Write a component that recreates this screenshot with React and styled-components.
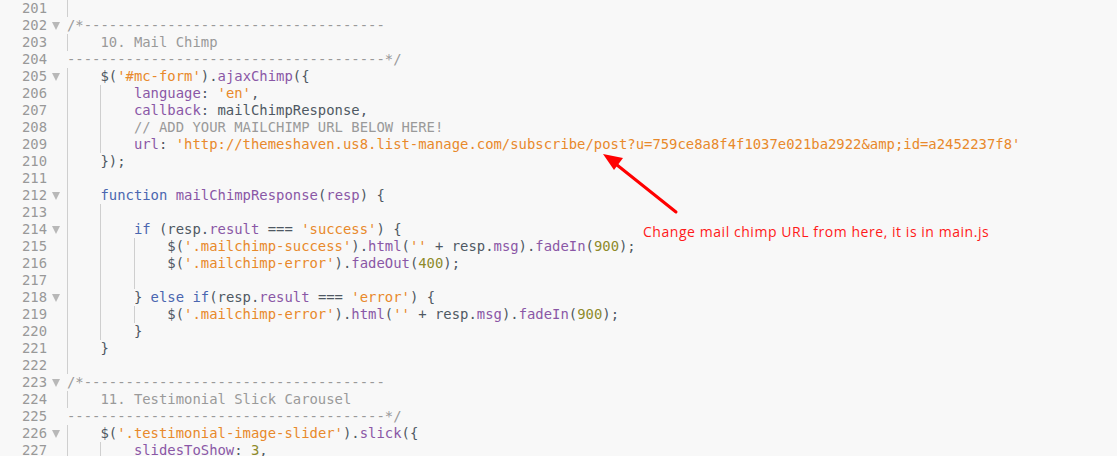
import React from 'react';
import styled, { createGlobalStyle } from 'styled-components';

const GlobalStyle = createGlobalStyle`
  html, body {
    margin: 0;
    padding: 0;
    background: #f8f8f8;
  }
`;

const Editor = styled.div`
  position: relative;
  width: 1117px;
  height: 456px;
  overflow: hidden;
  background: #f8f8f8;
  font-family: "DejaVu Sans Mono", "Liberation Mono", monospace;
  font-size: 13.9px;
`;

const Row = styled.div`
  display: flex;
  height: 17px;
  line-height: 17px;
`;

const LineNum = styled.div`
  width: 47px;
  text-align: right;
  color: #999;
  flex-shrink: 0;
`;

const FoldCell = styled.div`
  width: 20px;
  flex-shrink: 0;
  display: flex;
  align-items: center;
  padding-left: 5px;
  box-sizing: border-box;
`;

const FoldArrow = styled.span`
  width: 0;
  height: 0;
  border-left: 4px solid transparent;
  border-right: 4px solid transparent;
  border-top: 8px solid #b8b8b8;
`;

const Code = styled.div`
  display: flex;
  white-space: pre;
  color: #4f5863;
`;

const Guide = styled.span`
  display: inline-block;
  width: 4ch;
  height: 17px;
  border-left: 1px solid #cfcfcf;
  box-sizing: border-box;
  flex-shrink: 0;
`;

const tokenColors = {
  p: '#4f5863',
  k: '#4a66b0',
  f: '#8a57a6',
  s: '#e8892b',
  n: '#8e8a2a',
  c: '#9a9a9a',
};

const Tok = styled.span`
  color: ${(p) => tokenColors[p.$t]};
`;

const Note = styled.div`
  position: absolute;
  left: 643px;
  top: 222px;
  font-family: "Open Sans", "Liberation Sans", sans-serif;
  font-size: 14px;
  letter-spacing: 0.55px;
  color: #ff1a1a;
  white-space: nowrap;
`;

const Arrow = styled.svg`
  position: absolute;
  left: 590px;
  top: 145px;
`;

const open = '/*' + '-'.repeat(36);
const close = '-'.repeat(38) + '*/';
const url = "'http://themeshaven.us8.list-manage.com/subscribe/post?u=759ce8a8f4f1037e021ba2922&amp;id=a2452237f8'";

const lines = [
  { n: 201, i: 1, t: [] },
  { n: 202, fold: true, i: 0, t: [['c', open]] },
  { n: 203, i: 1, t: [['c', '10. Mail Chimp']] },
  { n: 204, i: 0, t: [['c', close]] },
  { n: 205, fold: true, i: 1, t: [['p', '$('], ['s', "'#mc-form'"], ['p', ').'], ['f', 'ajaxChimp'], ['p', '({']] },
  { n: 206, i: 2, t: [['f', 'language'], ['p', ': '], ['s', "'en'"], ['p', ',']] },
  { n: 207, i: 2, t: [['f', 'callback'], ['p', ': mailChimpResponse,']] },
  { n: 208, i: 2, t: [['c', '// ADD YOUR MAILCHIMP URL BELOW HERE!']] },
  { n: 209, i: 2, t: [['f', 'url'], ['p', ': '], ['s', url]] },
  { n: 210, i: 1, t: [['p', '});']] },
  { n: 211, i: 1, t: [] },
  { n: 212, fold: true, i: 1, t: [['k', 'function'], ['p', ' '], ['f', 'mailChimpResponse'], ['p', '('], ['f', 'resp'], ['p', ') {']] },
  { n: 213, i: 2, t: [] },
  { n: 214, fold: true, i: 2, t: [['k', 'if'], ['p', ' (resp.'], ['f', 'result'], ['p', ' === '], ['s', "'success'"], ['p', ') {']] },
  { n: 215, i: 3, t: [['p', '$('], ['s', "'.mailchimp-success'"], ['p', ').'], ['f', 'html'], ['p', '('], ['s', "''"], ['p', ' + resp.'], ['f', 'msg'], ['p', ').'], ['f', 'fadeIn'], ['p', '('], ['n', '900'], ['p', ');']] },
  { n: 216, i: 3, t: [['p', '$('], ['s', "'.mailchimp-error'"], ['p', ').'], ['f', 'fadeOut'], ['p', '('], ['n', '400'], ['p', ');']] },
  { n: 217, i: 3, t: [] },
  { n: 218, fold: true, i: 2, t: [['p', '} '], ['k', 'else if'], ['p', '(resp.'], ['f', 'result'], ['p', ' === '], ['s', "'error'"], ['p', ') {']] },
  { n: 219, i: 3, t: [['p', '$('], ['s', "'.mailchimp-error'"], ['p', ').'], ['f', 'html'], ['p', '('], ['s', "''"], ['p', ' + resp.'], ['f', 'msg'], ['p', ').'], ['f', 'fadeIn'], ['p', '('], ['n', '900'], ['p', ');']] },
  { n: 220, i: 2, t: [['p', '}']] },
  { n: 221, i: 1, t: [['p', '}']] },
  { n: 222, i: 1, t: [] },
  { n: 223, fold: true, i: 0, t: [['c', open]] },
  { n: 224, i: 1, t: [['c', '11. Testimonial Slick Carousel']] },
  { n: 225, i: 0, t: [['c', close]] },
  { n: 226, fold: true, i: 1, t: [['p', '$('], ['s', "'.testimonial-image-slider'"], ['p', ').'], ['f', 'slick'], ['p', '({']] },
  { n: 227, i: 2, t: [['f', 'slidesToShow'], ['p', ': '], ['n', '3'], ['p', ',']] },
];

const App = () => {
  return (
    <>
      <GlobalStyle />
      <Editor>
        {lines.map((line) => (
          <Row key={line.n}>
            <LineNum>{line.n}</LineNum>
            <FoldCell>{line.fold && <FoldArrow />}</FoldCell>
            <Code>
              {Array.from({ length: line.i }).map((_, k) => (
                <Guide key={k} />
              ))}
              <span>
                {line.t.map(([t, text], k) => (
                  <Tok key={k} $t={t}>{text}</Tok>
                ))}
              </span>
            </Code>
          </Row>
        ))}

        {/* annotation arrow pointing at the url */}
        <Arrow width="100" height="80" viewBox="0 0 100 80">
          <line x1="86" y1="67" x2="22" y2="16" stroke="#ff0000" strokeWidth="3" strokeLinecap="round" />
          <polygon points="13,9 33,13 24,25" fill="#ff0000" />
        </Arrow>
        <Note>Change mail chimp URL from here, it is in main.js</Note>
      </Editor>
    </>
  );
};

export default App;
